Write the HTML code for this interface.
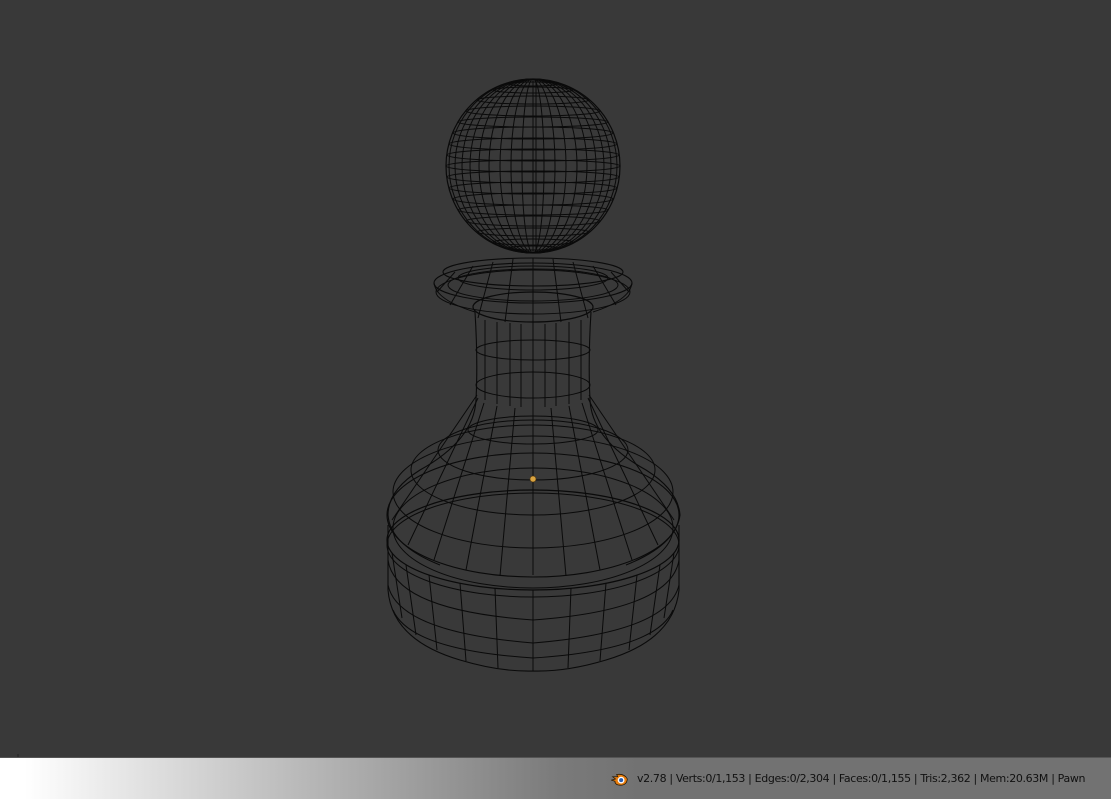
<!DOCTYPE html>
<html><head><meta charset="utf-8"><style>
html,body{margin:0;padding:0;width:1111px;height:799px;overflow:hidden;background:#393939;}
#bar{position:absolute;left:0;top:757px;width:1111px;height:42px;border-top:1px solid #555;box-sizing:border-box;
background:linear-gradient(to right,#fff 0px,#fff 25px,#b9b9b9 300px,#7a7a7a 560px,#727272 640px,#727272 100%);}
#txt{position:absolute;left:637px;top:14px;font:11px "DejaVu Sans","Liberation Sans",sans-serif;color:#111;white-space:nowrap;letter-spacing:-0.36px}
#logo{position:absolute;left:611px;top:12px;width:18px;height:18px}
svg{position:absolute;left:0;top:0}
</style></head><body>
<svg width="1111" height="757" viewBox="0 0 1111 757" fill="none" stroke="#0a0a0a" stroke-width="1">
<g>
<circle cx="533" cy="166" r="87" stroke-width="1.2"/>
<ellipse cx="533" cy="166" rx="87" ry="6"/>
<ellipse cx="533" cy="155" rx="86" ry="6"/>
<ellipse cx="533" cy="177" rx="86" ry="6"/>
<ellipse cx="533" cy="144" rx="84" ry="6"/>
<ellipse cx="533" cy="188" rx="84" ry="6"/>
<ellipse cx="533" cy="133" rx="80" ry="6"/>
<ellipse cx="533" cy="199" rx="80" ry="6"/>
<ellipse cx="533" cy="122" rx="75" ry="5"/>
<ellipse cx="533" cy="210" rx="75" ry="5"/>
<ellipse cx="533" cy="111" rx="67" ry="5"/>
<ellipse cx="533" cy="221" rx="67" ry="5"/>
<ellipse cx="533" cy="100" rx="56" ry="4"/>
<ellipse cx="533" cy="232" rx="56" ry="4"/>
<ellipse cx="533" cy="90" rx="40" ry="3"/>
<ellipse cx="533" cy="242" rx="40" ry="3"/>
<ellipse cx="533" cy="84" rx="24" ry="2"/>
<ellipse cx="533" cy="248" rx="24" ry="2"/>
<line x1="533" y1="79" x2="533" y2="253"/>
<line x1="536" y1="79" x2="536" y2="253"/>
<ellipse cx="533" cy="166" rx="11" ry="87"/>
<ellipse cx="533" cy="166" rx="22" ry="87"/>
<ellipse cx="533" cy="166" rx="33" ry="87"/>
<ellipse cx="533" cy="166" rx="44" ry="87"/>
<ellipse cx="533" cy="166" rx="54" ry="87"/>
<ellipse cx="533" cy="166" rx="63" ry="87"/>
<ellipse cx="533" cy="166" rx="71" ry="87"/>
<ellipse cx="533" cy="166" rx="78" ry="87"/>
<ellipse cx="533" cy="166" rx="84" ry="87"/>
</g>
<g>
<ellipse cx="533" cy="272" rx="90" ry="14" stroke-width="1.1"/>
<ellipse cx="533" cy="283" rx="99" ry="20" stroke-width="1.1"/>
<ellipse cx="533" cy="292" rx="97" ry="22"/>
<ellipse cx="533" cy="278" rx="75" ry="12"/>
<ellipse cx="533" cy="285" rx="85" ry="16"/>
<ellipse cx="533" cy="307" rx="60" ry="15" stroke-width="1.2"/>
<path d="M434 283 Q436 300 475 312 M632 283 Q630 300 593 312"/>
<path d="M533 258 V322 M513 259 L505 322 M553 259 L561 322 M493 262 L478 318 M573 262 L588 318 M473 266 L450 305 M593 266 L616 305 M455 272 L437 292 M611 272 L629 292"/>
</g>
<g>
<path d="M475 312 Q478 360 476 400 M591 312 Q588 360 590 400" stroke-width="1.1"/>
<ellipse cx="533" cy="350" rx="57" ry="10"/>
<ellipse cx="533" cy="385" rx="57" ry="13"/>
<path d="M485 320 V400 M497 322 V404 M510 323 V406 M521 324 V407 M533 322 V408 M545 324 V407 M556 323 V406 M569 322 V404 M581 320 V400"/>
</g>
<g>
<path d="M476 400 Q474 440 420 470 Q388 490 388 515 Q390 545 440 565 M590 400 Q592 440 646 470 Q678 490 680 515 Q676 545 626 565" stroke-width="1.1"/>
<ellipse cx="533" cy="430" rx="65" ry="14"/>
<ellipse cx="533" cy="450" rx="95" ry="30"/>
<ellipse cx="533" cy="470" rx="122" ry="45"/>
<ellipse cx="533" cy="492" rx="140" ry="56"/>
<ellipse cx="533" cy="515" rx="146" ry="62" stroke-width="1.1"/>
<ellipse cx="533" cy="528" rx="140" ry="60"/>
<path d="M533 408 V575 M515 408 L500 576 M551 408 L566 576 M497 406 L466 570 M569 406 L600 570 M484 403 L434 560 M582 403 L632 560 M478 398 L408 545 M588 398 L658 545 M477 395 L392 520 M589 395 L674 520"/>
</g>
<g>
<ellipse cx="533" cy="540" rx="146" ry="50" stroke-width="1.2"/>
<ellipse cx="533" cy="545" rx="146" ry="52"/>
<path d="M388 525 V590 Q392 640 460 660 Q500 672 533 671 Q566 672 606 660 Q674 640 679 590 V525" stroke-width="1.1"/>
<path d="M388 560 Q395 610 533 620 Q671 610 679 560"/>
<path d="M388 585 Q398 632 533 643 Q668 632 679 585"/>
<path d="M393 610 Q410 650 533 658 Q656 650 673 610"/>
<path d="M533 590 V671 M495 588 L498 668 M571 588 L568 668 M460 583 L466 661 M606 583 L600 661 M429 575 L437 650 M637 575 L629 650 M406 565 L416 635 M660 565 L650 635 M392 553 L402 618 M674 553 L664 618"/>
</g>
<circle cx="533" cy="479" r="3" fill="#d9a441" stroke="#5a3c10" stroke-width="0.6"/>
<line x1="18" y1="754" x2="18" y2="757" stroke="#222"/>
</svg>
<div id="bar">
<svg id="logo" viewBox="0 0 16 16"><path d="M0.5 9 L4 8 L1.5 6 L6 6 L5 4 Q12 3 14.5 8 Q14 13.5 8.5 13.5 Q3.5 13.5 3.5 10 Z" fill="#e87d0d" stroke="#2a1a05" stroke-width="0.7"/><circle cx="9" cy="9" r="3" fill="#fff"/><circle cx="9" cy="9" r="1.8" fill="#2a5db0"/></svg>
<div id="txt">v2.78 | Verts:0/1,153 | Edges:0/2,304 | Faces:0/1,155 | Tris:2,362 | Mem:20.63M | Pawn</div>
</div>
</body></html>
